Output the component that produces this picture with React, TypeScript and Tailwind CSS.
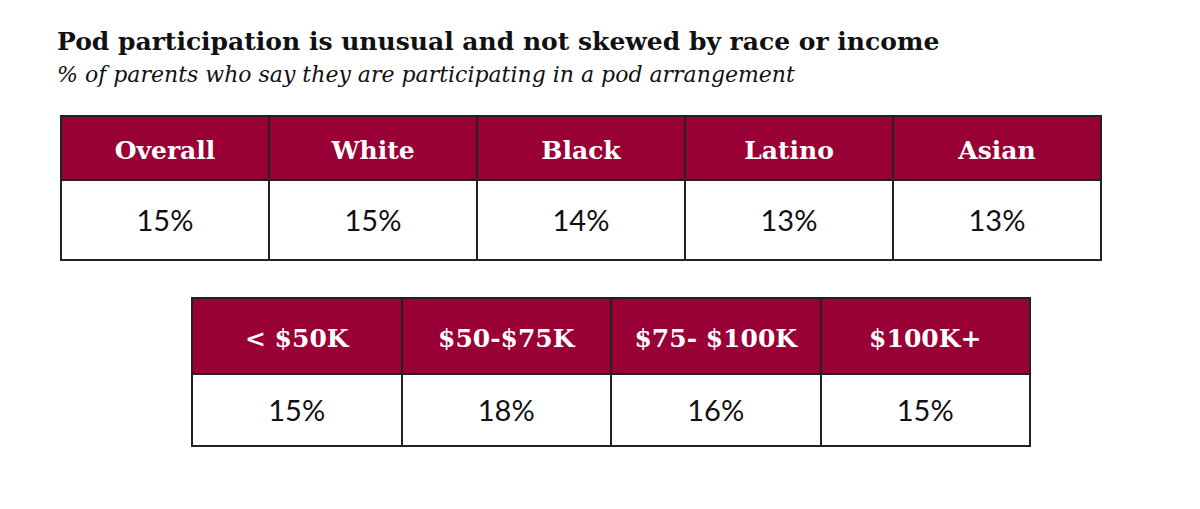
import React from "react";

const race = [
  { label: "Overall", value: "15%" },
  { label: "White", value: "15%" },
  { label: "Black", value: "14%" },
  { label: "Latino", value: "13%" },
  { label: "Asian", value: "13%" },
];

const income = [
  { label: "< $50K", value: "15%" },
  { label: "$50-$75K", value: "18%" },
  { label: "$75- $100K", value: "16%" },
  { label: "$100K+", value: "15%" },
];

type Cell = { label: string; value: string };

const Table = ({ cells, className, headH, bodyH }: { cells: Cell[]; className: string; headH: string; bodyH: string }) => (
  <table className={`table-fixed border-collapse ${className}`}>
    <tbody>
      <tr className={headH}>
        {cells.map((c) => (
          <td
            key={c.label}
            className="border-2 border-[#222] bg-[#990035] pt-[5px] text-center align-middle font-['DejaVu_Serif',serif] text-[25px] font-bold text-white"
          >
            {c.label}
          </td>
        ))}
      </tr>
      <tr className={bodyH}>
        {cells.map((c) => (
          <td
            key={c.label}
            className="border-2 border-[#222] bg-white text-center align-middle font-['Lato',sans-serif] text-[29px] text-[#111]"
          >
            {c.value}
          </td>
        ))}
      </tr>
    </tbody>
  </table>
);

const App = () => {
  return (
    <section className="h-[509px] w-[1200px] overflow-hidden bg-white pt-[25px]">
      <div className="pl-[57px] text-[#111]">
        <h1 className="font-['DejaVu_Serif',serif] text-[25px] font-bold leading-[34px]">
          Pod participation is unusual and not skewed by race or income
        </h1>
        <p className="font-['DejaVu_Serif',serif] text-[22px] italic leading-[31px]">
          % of parents who say they are participating in a pod arrangement
        </p>
      </div>
      <Table cells={race} className="ml-[60px] mt-[25px] w-[1042px]" headH="h-[64px]" bodyH="h-[80px]" />
      <Table cells={income} className="ml-[191px] mt-[36px] w-[840px]" headH="h-[76px]" bodyH="h-[72px]" />
    </section>
  );
};

export default App;
